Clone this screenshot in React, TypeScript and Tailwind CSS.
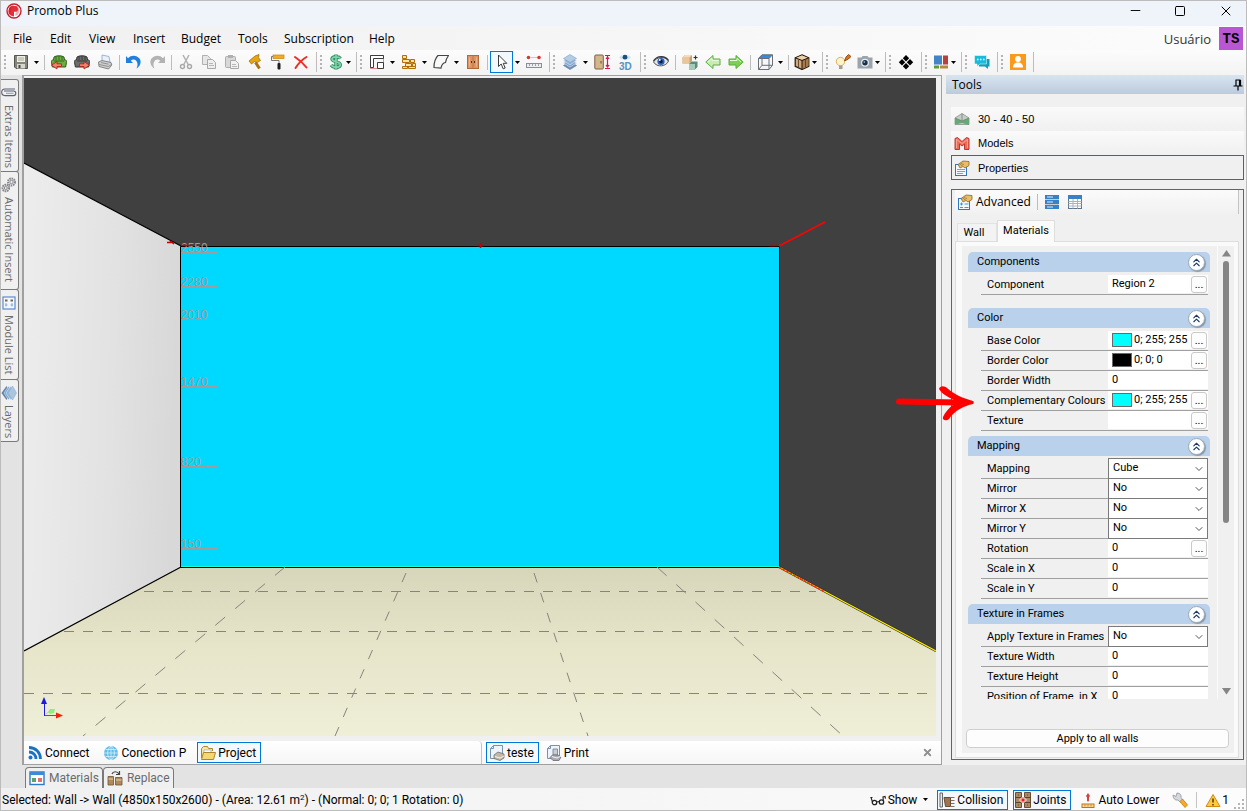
import React, { useState } from 'react';
import { ChevronDown, ChevronsUp, Minus, Square, X } from 'lucide-react';

type IconProps = { className?: string };

const Svg: React.FC<{ size?: number; children: React.ReactNode }> = ({ size = 16, children }) => (
  <svg width={size} height={size} viewBox="0 0 16 16" fill="none" className="shrink-0" aria-hidden="true">
    {children}
  </svg>
);

const LogoIcon = () => (
  <Svg>
    <circle cx="8" cy="8" r="7" fill="#fff" stroke="#c8202f" strokeWidth="1.4" />
    <path d="M7.6 2.6A5.4 5.4 0 0 0 5 12.6V8h2.6z" fill="#d8232f" />
    <path d="M6 3h3.5a2.8 2.8 0 0 1 0 5.8H8v4.6a5.5 5.5 0 0 1-4-2z" fill="#e0313b" />
    <path d="M11 3.6a5.4 5.4 0 0 1-1.6 9.5V10a4 4 0 0 0 1.6-6.4z" fill="#f4a9ac" />
  </Svg>
);

const SaveIcon = () => (
  <Svg>
    <path d="M1.5 1.5h13v13H3L1.5 13z" fill="#85857a" stroke="#55554e" />
    <path d="M4 2h8v6H4z" fill="#efefe6" />
    <path d="M5 4h6M5 6h6" stroke="#a8a894" />
    <path d="M4 10h8v4.5H4z" fill="#d6d6cf" />
    <path d="M5.5 11h2v3h-2z" fill="#4a4a44" />
  </Svg>
);

const SofaIcon: React.FC<{ body: string; dark: string; flip?: boolean }> = ({ body, dark, flip }) => (
  <Svg>
    <path d="M3 3c2-1.6 8-1.6 10 0l.5 3c1.8-.2 2.5 1 2 2.3L14.600 13H1.400L.5 8.300C0 7 .8 5.800 2.500 6z" fill={body} stroke={dark} />
    <path d="M5 2.500v4M8 2.200v4M11 2.500v4M3 7h10" stroke={dark} strokeWidth=".8" />
    {flip ? (
      <path d="M5.500 9.800H10V7.500l5.500 3.700L10 15v-2.500H5.500z" fill="#f0826a" stroke="#a82a1c" strokeWidth=".9" />
    ) : (
      <path d="M10.500 9.800H6V7.500L.5 11.200 6 15v-2.500h4.500z" fill="#f0826a" stroke="#a82a1c" strokeWidth=".9" />
    )}
  </Svg>
);

const PrinterIcon = () => (
  <Svg>
    <path d="M5 1l7 1.500 1 6-8-1z" fill="#e8f1fb" stroke="#8aa4c4" strokeWidth=".8" />
    <path d="M1.500 8L5 6.500l9 2 .8 2.500-3.300 4L2 12.500z" fill="#cfcfcf" stroke="#7c7c7c" strokeWidth=".9" />
    <path d="M2 10.500l9.500 2 3-2M4 8.500l7.500 1.700" stroke="#8a8a8a" strokeWidth=".9" />
  </Svg>
);

const UndoIcon: React.FC<{ color: string; flip?: boolean }> = ({ color, flip }) => (
  <Svg>
    <g transform={flip ? 'matrix(-1 0 0 1 16 0)' : undefined}>
      <path d="M0 2l2 2.200C5 .5 11 1 13.500 4.500c2.500 3.500.5 8-3 10 1.500-3 1.500-6-.5-8C8.500 5 6.500 5 4.800 6.800L7 9H0z" fill={color} />
    </g>
  </Svg>
);

const CutIcon = () => (
  <Svg>
    <path d="M5 1l5.500 10M11 1L5.500 11" stroke="#b1b1b1" strokeWidth="1.500" />
    <circle cx="4.500" cy="12.500" r="2" stroke="#a8a8a8" strokeWidth="1.400" />
    <circle cx="11.500" cy="12.500" r="2" stroke="#a8a8a8" strokeWidth="1.400" />
  </Svg>
);

const CopyIcon = () => (
  <Svg>
    <path d="M1.500 1.500h5l3 3v6h-8z" fill="#e6e6e6" stroke="#b0b0b0" />
    <path d="M6.500 5.500h5l3 3v6h-8z" fill="#eee" stroke="#a8a8a8" />
    <path d="M8 9.500h4M8 11.500h5" stroke="#b8b8b8" />
  </Svg>
);

const PasteIcon = () => (
  <Svg>
    <rect x="1.500" y="2.500" width="10" height="11" rx="1" fill="#d8d8d8" stroke="#adadad" />
    <rect x="4" y="1" width="5" height="3" fill="#b0b0b0" />
    <path d="M6.500 6.500h5l3 3v5h-8z" fill="#f2f2f2" stroke="#a8a8a8" />
    <path d="M8 10.500h4M8 12.500h5" stroke="#b8b8b8" />
  </Svg>
);

const HammerIcon = () => (
  <Svg>
    <path d="M2 7l6-5 4-1.500-.5 3 2 3-4 2.500-2-1.500-3 2.500z" fill="#e5a412" stroke="#a87205" strokeWidth=".8" />
    <path d="M8.500 8.500l4 6" stroke="#a8730c" strokeWidth="3" />
  </Svg>
);

const RollerIcon = () => (
  <Svg>
    <rect x="3" y="1" width="11" height="3.500" fill="#f2ad1c" stroke="#c98507" strokeWidth=".7" />
    <path d="M3 2.500H1.500v4H9V9" stroke="#777" />
    <rect x="7.500" y="9" width="3" height="6.500" rx="1" fill="#1e1e1e" />
  </Svg>
);

const DeleteIcon = () => (
  <Svg>
    <path d="M2 3c3 2 8 6 11.500 10.500M13.500 3C10 5 5 10 2.500 14" stroke="#ee2b24" strokeWidth="2" strokeLinecap="round" />
  </Svg>
);

const DollarIcon = () => (
  <Svg>
    <path d="M12.500 4.500C11 2.500 4.500 1.800 4 5c-.4 3 8.500 2.200 8.300 5.800C12 14 5 13.800 3.200 11M8 .5v15" stroke="#2c8a5c" strokeWidth="3.400" />
    <path d="M12.500 4.500C11 2.500 4.500 1.800 4 5c-.4 3 8.500 2.200 8.300 5.800C12 14 5 13.800 3.200 11M8 1v14" stroke="#7fd3a9" strokeWidth="1.700" />
  </Svg>
);

const WallsIcon = () => (
  <Svg>
    <path d="M1.500 1.500h13v13h-13z" stroke="#e58b8b" />
    <path d="M1.500 13.500v-12h13v3h-10v9zM8.500 14.500v-6h6v6z" fill="#fff" stroke="#3c3c3c" />
  </Svg>
);

const BricksIcon = () => (
  <Svg>
    <path d="M1.500 1.500h4v3h-4zM1.500 5.500h7v3h-7zM9.500 5.500h4v3h-4zM4.500 9.500h6v3h-6zM11.500 9.500h3v3h-3zM1.500 12.500h5v2h-5zM7.500 12.500h7v2h-7z" fill="#ffe2a8" stroke="#b26f06" />
  </Svg>
);

const ShapeIcon = () => (
  <Svg>
    <path d="M5 1.500h10.500c-1.500 2-2.500 4.500-3 7-3 .5-4 3-4.500 5.500l-7-.5C1 8 2.500 4 5 1.500z" fill="#f8f8f8" stroke="#444" strokeWidth="1.200" />
  </Svg>
);

const CabinetIcon = () => (
  <Svg>
    <rect x="2.500" y="1.500" width="11" height="13" fill="#dd9563" stroke="#b06a3c" />
    <path d="M8 2v12" stroke="#b87647" />
    <path d="M4.500 3.500v9M11.500 3.500v9" stroke="#edb386" />
    <path d="M6.500 7v2M9.500 7v2" stroke="#5c2c10" />
  </Svg>
);

const CursorIcon = () => (
  <Svg>
    <path d="M4.500 1v11.500L7.200 10l2 4.800 2-.8-2-4.700h3.600z" fill="#fff" stroke="#3b3b3b" />
  </Svg>
);

const RulerIcon = () => (
  <Svg>
    <circle cx="2.500" cy="3.500" r="1.800" fill="#d43a34" />
    <circle cx="13" cy="3.500" r="1.800" fill="#d43a34" />
    <path d="M5.500 3.500h5" stroke="#999" strokeDasharray="1 1" />
    <rect x=".5" y="9.500" width="15" height="4" fill="#eceef2" stroke="#8a8f98" />
    <path d="M3.500 10v2M6.500 10v2M9.500 10v2M12.500 10v2" stroke="#9da1a9" />
  </Svg>
);

const LayersIcon: React.FC<IconProps> = () => (
  <Svg>
    <path d="M8 7.500l6.500 4L8 15.500l-6.500-4z" fill="#6d91b8" stroke="#56799f" strokeWidth=".6" />
    <path d="M8 5l6.500 4L8 13 1.500 9z" fill="#7fa3c9" stroke="#e2ecf5" strokeWidth=".6" />
    <path d="M8 2.800l6.500 4L8 10.800 1.500 6.800z" fill="#93b3d4" stroke="#e2ecf5" strokeWidth=".6" />
    <path d="M8 .5l6.500 4L8 8.500 1.500 4.500z" fill="#b4cde6" stroke="#7f9fc1" strokeWidth=".6" />
  </Svg>
);

const DoorIcon = () => (
  <Svg>
    <rect x=".8" y="1" width="8.500" height="14" rx="1" fill="#d3b78c" stroke="#7c6243" />
    <path d="M7 7v2.500" stroke="#6a4f30" />
    <path d="M11 1.500h5M11 14.500h5M13.500 2v12M12 5l1.500-2L15 5M12 11l1.500 2 1.500-2" stroke="#d9164f" strokeWidth="1.200" />
  </Svg>
);

const View3DIcon = () => (
  <Svg>
    <path d="M2 3.500C4.500.3 11.500.3 14 3.500c-2.500 3-9.500 3-12 0z" fill="#cfe6f5" />
    <circle cx="8" cy="3.200" r="2.400" fill="#1d4f80" />
    <text x="2" y="15.500" fontSize="10" fontWeight="700" fontFamily="Liberation Sans, Arial, sans-serif" fill="#5592bf">3D</text>
  </Svg>
);

const EyeIcon = () => (
  <Svg>
    <path d="M.5 8C3.500 2.500 12 1.800 15.500 7c-2 5.500-11.500 7-15 1z" fill="#e3e6ea" stroke="#55575c" />
    <circle cx="8" cy="7.500" r="3.600" fill="#2d5fb6" />
    <circle cx="8" cy="7.500" r="1.700" fill="#0b1c40" />
    <circle cx="6.800" cy="6" r=".9" fill="#fff" />
    <path d="M.5 7C4 1.500 12 1 15.500 6.500" stroke="#37393e" strokeWidth="1.300" />
  </Svg>
);

const BoxesIcon = () => (
  <Svg>
    <path d="M.5 3.500L3 1h7v6L7.500 9.500h-7z" fill="#cf9f6a" />
    <path d="M.5 3.500h7v6h-7z" fill="#e8c79c" />
    <path d="M.5 3.500L3 1h7L7.500 3.500z" fill="#f3dcbc" />
    <path d="M7 10l2.500-2.500h6v5.500L13 15.500H7z" fill="#5c8d78" />
    <path d="M7 10h6v5.500H7z" fill="#a3cbb8" />
    <path d="M11.500 3.500h4M13.500 1.500v4" stroke="#333" strokeWidth="1.200" />
  </Svg>
);

const ArrowIcon: React.FC<{ flip?: boolean }> = ({ flip }) => (
  <Svg>
    <g transform={flip ? 'matrix(-1 0 0 1 16 0)' : undefined}>
      <path d="M.8 8L8 1.500V5h7v6H8v3.500z" fill={flip ? '#7cd152' : '#c9ecb5'} stroke="#5aad42" />
      <path d="M3 8l4-3.700V6.500h7" stroke="#e6f8dc" />
    </g>
  </Svg>
);

const CubeIcon = () => (
  <Svg>
    <path d="M1 4.500L5 .8h10.500L12 4.500z" fill="#2f8de4" />
    <path d="M1.500 4.500h10.500v11H1.500zM1.500 4.500l3.500-3.700h10.500v10.500L12 15.500M12 4.500l3.500-3.700M5 5v6.300h10.500M5 11.300l-3.500 4.200" stroke="#6b6f75" />
  </Svg>
);

const WoodCubeIcon = () => (
  <Svg>
    <path d="M8 .8l6.800 3v8.500L8 15.500l-6.800-3.200V3.800z" fill="#d1a87c" stroke="#22190f" strokeWidth="1.200" />
    <path d="M8 1.500l5.500 2.300L8 6 2.500 3.800z" fill="#ecd2ac" />
    <path d="M8 6.500l6.500-2.500v8L8 15z" fill="#a77a4e" />
    <path d="M1.200 3.800L8 6.500l6.800-2.700M8 6.500v9" stroke="#22190f" />
    <path d="M4.500 6v7M11.500 6v7" stroke="#4d3720" strokeWidth=".8" />
  </Svg>
);

const BulbIcon = () => (
  <Svg>
    <circle cx="5.500" cy="7.500" r="4.200" fill="#fdf3cc" stroke="#d9b65c" />
    <path d="M4 11.500h3.500v3.500H4z" fill="#9d9d9d" />
    <path d="M9.500 7L11 3l2.500-2.500 2.500 2L13.500 5z" fill="#d9741c" stroke="#7a3a0a" strokeWidth=".8" />
  </Svg>
);

const CameraIcon = () => (
  <Svg>
    <path d="M.5 3.500h4l1-1.500h5l1 1.500h4v11H.5z" fill="#9aa4ab" />
    <circle cx="8" cy="8.800" r="4" fill="#e6eaed" />
    <circle cx="8" cy="8.800" r="2.700" fill="#1d2f45" />
    <circle cx="7.300" cy="8" r=".9" fill="#7ea6cc" />
  </Svg>
);

const DiamondsIcon = () => (
  <Svg>
    <path d="M8 1l3.200 3.200L8 7.400 4.800 4.200zM4 5l3.200 3.200L4 11.400.8 8.200zM12 5l3.200 3.200-3.200 3.200-3.200-3.200zM8 9l3.200 3.200L8 15.400l-3.200-3.200z" fill="#000" />
  </Svg>
);

const WindowsIcon = () => (
  <Svg>
    <path d="M1 1.500h8v9H1z" fill="#4383c8" />
    <path d="M10 1.500h5v9h-5z" fill="#b6423f" />
    <path d="M1 11.500h5v3H1z" fill="#5c9b3b" />
    <path d="M7 11.500h8v3H7z" fill="#b8893a" />
  </Svg>
);

const ChatIcon = () => (
  <Svg>
    <path d="M5 5h10.500v7.500H14V15l-3-2.500H5z" fill="#0f9db8" />
    <path d="M.5 1.500h12v8.500H6L3 12.500V10H.5z" fill="#19bcd8" stroke="#fff" strokeWidth=".5" />
    <path d="M3 5.500h1.500M6 5.500h1.500M9 5.500h1.500" stroke="#fff" strokeWidth="1.500" />
  </Svg>
);

const PersonIcon = () => (
  <Svg>
    <path d="M0 0h16v16H0z" fill="#f99a1d" />
    <circle cx="8" cy="5" r="2.900" fill="#fff" />
    <path d="M3 13.500c0-3.500 2-5 5-5s5 1.500 5 5z" fill="#fff" />
  </Svg>
);

const TriangleIcon = () => (
  <Svg>
    <path d="M1 7l7-4.500L15 7v6.500H1z" fill="#c5cdc7" stroke="#87948a" strokeWidth=".8" />
    <path d="M1 7l7 3 7-3v7l-7-2-7 1.500z" fill="#67a877" />
    <path d="M8 2.500V10M1 7l7 3 7-3" stroke="#75827a" strokeWidth=".8" />
  </Svg>
);

const ModelsIcon = () => (
  <Svg>
    <path d="M1 14.500v-11L3.500 2.500 8 6.500l4.500-4 2.500 1v11h-4.500V9L8 11 5.500 9v5.500z" fill="#ef6a5a" stroke="#b93a2c" />
    <path d="M2.500 13V4.500L8 8.500l5.500-4V13" stroke="#f9b3a6" strokeWidth=".8" />
  </Svg>
);

const PropertiesIcon: React.FC<{ plus?: boolean }> = ({ plus }) => (
  <Svg>
    <rect x="1.500" y="4.500" width="11" height="11" fill="#f4f9ff" stroke="#2b77c8" />
    {plus ? (
      <path d="M3 10h3M4.500 8.500v3M7.500 10h4M3 13.500h3M7.500 13.500h4" stroke="#4d90d6" />
    ) : (
      <path d="M3 9.500h8M3 11.500h8M3 13.500h6" stroke="#6da6df" />
    )}
    <path d="M4 4.500l5-3.500 6 .5v4l-4 2.500-2-1.500-3 1.500z" fill="#e8bd6a" stroke="#8c6526" strokeWidth=".8" />
    <path d="M5.500 5l3-2M7 6l3-2" stroke="#8c6526" strokeWidth=".7" />
  </Svg>
);

const RowsIcon = () => (
  <Svg>
    <path d="M1 1h14v4H1zM1 6h14v4H1zM1 11h14v4H1z" fill="#3a80c5" />
    <path d="M1 5.500h14M1 10.500h14" stroke="#c3ced9" />
    <path d="M3 3h6M3 8h6M3 13h6" stroke="#dcebf8" />
  </Svg>
);

const TableIcon = () => (
  <Svg>
    <rect x="1.500" y="1.500" width="13" height="13" fill="#fff" stroke="#61758a" />
    <path d="M1 1h14v4H1z" fill="#3a80c5" />
    <path d="M1.500 7.500h13M1.500 9.500h13M1.500 12h13M6 5v9.500M10.500 5v9.500" stroke="#a6b4c2" />
  </Svg>
);

const RssIcon = () => (
  <Svg>
    <circle cx="3.500" cy="12.500" r="2" fill="#1c72c2" />
    <path d="M2 7c4 0 7 3 7 7M2 2.500c6.500 0 11.500 5 11.500 11.500" stroke="#1c72c2" strokeWidth="2.800" />
  </Svg>
);

const GlobeIcon = () => (
  <Svg>
    <circle cx="8" cy="8" r="7" fill="#62bce8" />
    <path d="M8 1v14M1 8h14M2.500 4.500h11M2.500 11.500h11M8 1C3.500 4 3.500 12 8 15c4.500-3 4.500-11 0-14z" stroke="#d8f0fb" strokeWidth=".8" />
  </Svg>
);

const FolderIcon = () => (
  <Svg>
    <path d="M1.500 13V3.500l2-2h4l1 2h4V6" fill="#f8e5a0" stroke="#a98630" />
    <path d="M4 5h7v4H4z" fill="#fff" stroke="#a0a0a0" strokeWidth=".6" />
    <path d="M1.500 14.500l2-7h12l-2 7z" fill="#f6d771" stroke="#a98630" />
  </Svg>
);

const PageIcon: React.FC<{ printer?: boolean }> = ({ printer }) => (
  <Svg>
    <path d="M4.500.5h9v13h-12v-10z" fill="#eef4fb" stroke="#7692b3" />
    <path d="M4.500.5v3h-3" stroke="#7692b3" />
    {printer ? (
      <>
        <path d="M7 4h4.500v6H7z" fill="#c9ccd2" stroke="#777a82" strokeWidth=".8" />
        <path d="M4 12.500L6.500 10h5.500l3 2-2 3.500H7z" fill="#a9abb0" stroke="#686a70" strokeWidth=".8" />
      </>
    ) : (
      <path d="M5 10l4-3 6 2v4l-4 2.500-6-2z" fill="#c1b9a8" stroke="#6f6f6f" strokeWidth=".8" />
    )}
    <path d="M6 11.500l5 1.500 4-2" stroke="#f4f4f4" />
  </Svg>
);

const MaterialsIcon = () => (
  <Svg>
    <rect x="1" y="2" width="14" height="12.500" fill="#fff" stroke="#2d7ac4" strokeWidth="1.400" />
    <path d="M1 2h14v3H1z" fill="#3c8bd6" />
    <path d="M3 8h4v4H3z" fill="#5ca36a" />
    <path d="M9 8h4v4H9z" fill="#e0706e" />
  </Svg>
);

const ReplaceIcon = () => (
  <Svg>
    <path d="M1 6.500h5.500v8.500H1zM8.500 7.500H15V15H8.500z" fill="#b08a5c" stroke="#6f5433" strokeWidth=".8" />
    <path d="M1.500 9h4.500M9 10h5.500" stroke="#ead4b0" />
    <path d="M5 4c1-3 5.500-3 7 0M12.500 1v3.500H9" stroke="#444" strokeWidth="1.200" />
  </Svg>
);

const ClipIcon = () => (
  <Svg>
    <path d="M3 6h9.500a2.300 2.300 0 0 1 0 4.600H4a3.200 3.200 0 0 1 0-6.600h9.500M14 4H5" stroke="#54627a" strokeWidth="1.100" />
    <path d="M5 8.300h7.500" stroke="#8d99ad" />
  </Svg>
);

const GearsIcon = () => (
  <Svg>
    <circle cx="10.500" cy="5" r="3.500" stroke="#85878c" strokeWidth="2" strokeDasharray="1.600 .7" />
    <circle cx="10.500" cy="5" r="1.700" stroke="#85878c" />
    <circle cx="4.800" cy="11" r="3.300" stroke="#85878c" strokeWidth="2" strokeDasharray="1.600 .7" />
    <circle cx="4.800" cy="11" r="1.500" stroke="#85878c" />
  </Svg>
);

const ModuleIcon = () => (
  <Svg>
    <rect x="2" y="2" width="12" height="12" fill="#f4f8fe" stroke="#5b8bd0" strokeWidth="1.200" />
    <path d="M4 4.500h2.500v2H4zM9.500 4.500H12v2H9.500z" fill="#6b6a52" />
    <path d="M4 10h2.500M9.500 10H12M5 8v3.500M11 8v3.500" stroke="#86a9d8" />
  </Svg>
);

const SideLayersIcon = () => (
  <Svg>
    <g transform="rotate(90 8 8)">
      <path d="M8 6.500l7 4L8 15.500l-7-5z" fill="#5d83ad" />
      <path d="M8 4.500l7 4L8 13 1 8.500z" fill="#7fa3c9" stroke="#e2ecf5" strokeWidth=".6" />
      <path d="M8 2.500l7 4L8 11 1 6.500z" fill="#93b3d4" stroke="#e2ecf5" strokeWidth=".6" />
      <path d="M8 .5l7 4L8 9 1 4.500z" fill="#a9c5e0" stroke="#8fb0d2" strokeWidth=".6" />
    </g>
  </Svg>
);

const GlassesIcon = () => (
  <Svg>
    <circle cx="4.500" cy="10.500" r="2.200" stroke="#222" strokeWidth="1.300" />
    <circle cx="11.500" cy="10" r="2.200" stroke="#222" strokeWidth="1.300" />
    <path d="M6.500 10l3-.5M2.500 10L1 5.500h1.500M13.300 8.500L13 5l2-.5.5 2" stroke="#222" strokeWidth="1.100" />
  </Svg>
);

const CollisionIcon = () => (
  <Svg>
    <path d="M1 1h2.500v14H1z" fill="#e7e9eb" stroke="#62676b" />
    <path d="M5 5.500h6.500v9H6.500z" fill="#9b7450" stroke="#6b4b31" />
    <path d="M12 5.500h3.500M12 8.500h3.500M12 11.500h3.500M12 14.500h3.500" stroke="#7d6d62" />
  </Svg>
);

const JointsIcon = () => (
  <Svg>
    <path d="M.5.500h6v15h-6zM9.500.500h6v15h-6z" fill="#ad8963" stroke="#6b4d34" />
    <path d="M.5 5.500h6M.5 10.500h6M9.500 5.500h6M9.500 10.500h6M3 3h1M3 13h1M12 3h1M12 13h1" stroke="#5b402a" />
    <path d="M7 5h2v2h2v2H9v2H7V9H5V7h2z" fill="#ee1c1c" stroke="#fff" strokeWidth=".8" />
  </Svg>
);

const AutoLowerIcon = () => (
  <Svg>
    <path d="M8 1l2 3-1 1.500V8.500L8 10 7 8.500v-3L6 4z" fill="#d3413b" />
    <rect x="2" y="12" width="12" height="3.500" fill="#ffd890" stroke="#b9771c" />
    <path d="M5 12.500v2M8 12.500v2M11 12.500v2" stroke="#b9771c" strokeWidth=".8" />
  </Svg>
);

const WrenchIcon = () => (
  <Svg>
    <path d="M1 3l3 1.500L5 1c3 0 4.500 2 4 4.500L11 8 8.500 10.500 6 8C3 8.500 1 6.500 1 3z" fill="#d5d9dd" stroke="#8d9399" strokeWidth=".8" />
    <path d="M8 9.500L10.500 7l5 6-2.500 2.500z" fill="#f8ab2b" stroke="#c57a09" strokeWidth=".8" />
  </Svg>
);

const WarningIcon = () => (
  <Svg>
    <path d="M8 2.500l7 12H1z" fill="#ffc93c" stroke="#d08b16" strokeLinejoin="round" />
    <path d="M8 6.500v4M8 12v1.500" stroke="#3f3200" strokeWidth="1.400" />
  </Svg>
);

const Caret = () => (
  <svg width="5" height="3" viewBox="0 0 5 3" aria-hidden="true" className="shrink-0">
    <path d="M0 0h5L2.500 3z" fill="#000" />
  </svg>
);

type ToolItem =
  | { kind: 'grip' | 'sep' | 'end' | 'caret' }
  | { kind: 'icon' | 'drop'; label: string; icon: React.ReactNode; active?: boolean };

const grip: ToolItem = { kind: 'grip' };
const sep: ToolItem = { kind: 'sep' };
const end: ToolItem = { kind: 'end' };
const caret: ToolItem = { kind: 'caret' };
const icon = (label: string, node: React.ReactNode, active = false): ToolItem => ({ kind: 'icon', label, icon: node, active });
const drop = (label: string, node: React.ReactNode): ToolItem => ({ kind: 'drop', label, icon: node });

const toolItems: ToolItem[] = [
  grip, icon('Save', <SaveIcon />), caret, sep,
  icon('Import', <SofaIcon body="#6fae3e" dark="#2c5c17" />),
  icon('Export', <SofaIcon body="#6c6c6c" dark="#333" flip />),
  icon('Print', <PrinterIcon />), sep,
  icon('Undo', <UndoIcon color="#2180dc" />),
  icon('Redo', <UndoIcon color="#b3b3b3" flip />), sep,
  icon('Cut', <CutIcon />), icon('Copy', <CopyIcon />), icon('Paste', <PasteIcon />),
  icon('Build', <HammerIcon />), icon('Paint', <RollerIcon />), icon('Delete', <DeleteIcon />), end,
  grip, drop('Budget', <DollarIcon />), end,
  grip, icon('Walls', <WallsIcon />), caret, icon('Bricks', <BricksIcon />), caret,
  icon('Shapes', <ShapeIcon />), caret, icon('Cabinet', <CabinetIcon />), sep,
  icon('Select', <CursorIcon />, true), caret, icon('Measure', <RulerIcon />), end,
  grip, icon('Layers', <LayersIcon />), caret, icon('Door height', <DoorIcon />), icon('3D view', <View3DIcon />), end,
  grip, icon('Visibility', <EyeIcon />), sep,
  icon('Move module', <BoxesIcon />), icon('Previous', <ArrowIcon />), icon('Next', <ArrowIcon flip />), sep,
  icon('Perspective', <CubeIcon />), caret, sep, drop('Render mode', <WoodCubeIcon />), end,
  grip, icon('Lighting', <BulbIcon />), drop('Camera', <CameraIcon />), end,
  grip, icon('Arrange', <DiamondsIcon />), end,
  grip, drop('Windows', <WindowsIcon />), end,
  grip, icon('Chat', <ChatIcon />), end,
  grip, icon('Account', <PersonIcon />), end,
];

const ToolbarItem: React.FC<{ item: ToolItem }> = ({ item }) => {
  switch (item.kind) {
    case 'grip':
      return (
        <span className="flex h-full w-2 items-center justify-center">
          <span className="h-[14px] w-[2px] bg-[repeating-linear-gradient(to_bottom,#b4b4b4_0_2px,transparent_2px_4px)]" />
        </span>
      );
    case 'sep':
      return (
        <span className="flex h-full w-[6px] items-center justify-center">
          <span className="h-[15px] w-px bg-[#bdbdbd]" />
        </span>
      );
    case 'end':
      return (
        <span className="flex h-full w-[5px] items-center justify-end">
          <span className="h-5 w-px bg-[#bdbdbd]" />
        </span>
      );
    case 'caret':
      return (
        <button aria-label="More options" className="flex h-full w-[9px] items-center justify-center">
          <Caret />
        </button>
      );
    case 'drop':
      return (
        <button aria-label={item.label} className="flex h-[22px] w-[27px] items-center justify-start gap-[2px] pl-[3px]">
          {item.icon}
          <Caret />
        </button>
      );
    default:
      return (
        <button
          aria-label={item.label}
          className={`flex h-[22px] w-[23px] items-center justify-center ${
            item.active ? 'border border-[#0078d7] bg-[#f3f8fd]' : ''
          }`}
        >
          {item.icon}
        </button>
      );
  }
};

const menus = [
  { label: 'File', width: 'w-[37px]' },
  { label: 'Edit', width: 'w-[39px]' },
  { label: 'View', width: 'w-[44px]' },
  { label: 'Insert', width: 'w-[48px]' },
  { label: 'Budget', width: 'w-[57px]' },
  { label: 'Tools', width: 'w-[46px]' },
  { label: 'Subscription', width: 'w-[85px]' },
  { label: 'Help', width: 'w-[40px]' },
];

const railTabs = [
  { label: 'Extras Items', height: 'h-[93px]', icon: <ClipIcon /> },
  { label: 'Automatic Insert', height: 'h-[119px]', icon: <GearsIcon /> },
  { label: 'Module List', height: 'h-[91px]', icon: <ModuleIcon /> },
  { label: 'Layers', height: 'h-[63px]', icon: <SideLayersIcon /> },
];

type Property = {
  label: string;
  value: string;
  kind: 'text' | 'browse' | 'color' | 'select';
  swatch?: string;
};

type PropertyGroup = { title: string; rows: Property[]; gap: string };

const groups: PropertyGroup[] = [
  {
    title: 'Components',
    gap: 'mb-[13px]',
    rows: [{ label: 'Component', value: 'Region 2', kind: 'browse' }],
  },
  {
    title: 'Color',
    gap: 'mb-[5px]',
    rows: [
      { label: 'Base Color', value: '0; 255; 255', kind: 'color', swatch: 'bg-[#00ffff]' },
      { label: 'Border Color', value: '0; 0; 0', kind: 'color', swatch: 'bg-black' },
      { label: 'Border Width', value: '0', kind: 'text' },
      { label: 'Complementary Colours', value: '0; 255; 255', kind: 'color', swatch: 'bg-[#00ffff]' },
      { label: 'Texture', value: '', kind: 'browse' },
    ],
  },
  {
    title: 'Mapping',
    gap: 'mb-[5px]',
    rows: [
      { label: 'Mapping', value: 'Cube', kind: 'select' },
      { label: 'Mirror', value: 'No', kind: 'select' },
      { label: 'Mirror X', value: 'No', kind: 'select' },
      { label: 'Mirror Y', value: 'No', kind: 'select' },
      { label: 'Rotation', value: '0', kind: 'browse' },
      { label: 'Scale in X', value: '0', kind: 'text' },
      { label: 'Scale in Y', value: '0', kind: 'text' },
    ],
  },
  {
    title: 'Texture in Frames',
    gap: '',
    rows: [
      { label: 'Apply Texture in Frames', value: 'No', kind: 'select' },
      { label: 'Texture Width', value: '0', kind: 'text' },
      { label: 'Texture Height', value: '0', kind: 'text' },
      { label: 'Position of Frame  in X', value: '0', kind: 'text' },
    ],
  },
];

const PropertyRow: React.FC<{ row: Property; id: string }> = ({ row, id }) => (
  <div className="flex h-5 shrink-0 items-stretch border-b border-[#a0a0a0]">
    <label htmlFor={id} className="flex min-w-0 flex-1 items-center whitespace-pre pl-[6px] pt-px">
      {row.label}
    </label>
    {row.kind === 'select' ? (
      <div className="relative w-[100px] shrink-0">
        <select
          id={id}
          defaultValue={row.value}
          className="-mt-px block h-[21px] w-full appearance-none border border-[#7a7a7a] bg-white pb-px pl-1 outline-none"
        >
          <option>{row.value}</option>
          <option>{row.value === 'No' ? 'Yes' : 'Box'}</option>
        </select>
        <ChevronDown size={12} strokeWidth={2} className="pointer-events-none absolute right-[3px] top-1 text-[#555]" />
      </div>
    ) : (
      <div className="mb-px flex w-[100px] shrink-0 items-center bg-white pl-1 pr-px">
        {row.swatch && <span className={`mr-[2px] h-[14px] w-5 shrink-0 border border-[#6a6a6a] ${row.swatch}`} />}
        <input id={id} defaultValue={row.value} className="h-4 min-w-0 flex-1 bg-transparent pb-px outline-none" />
        {row.kind !== 'text' && (
          <button
            aria-label={`Browse ${row.label}`}
            className="flex h-[17px] w-4 shrink-0 items-end justify-center rounded-[3px] border border-[#c9c9c9] bg-[#fdfdfd] leading-[15px]"
          >
            ...
          </button>
        )}
      </div>
    )}
  </div>
);

const PropertySection: React.FC<{ group: PropertyGroup }> = ({ group }) => {
  const [open, setOpen] = useState(true);

  return (
    <section className={`shrink-0 ${group.gap}`}>
      <h3 className="mb-[3px] flex h-5 items-center justify-between rounded-t-[5px] bg-[#b9d1ea] pl-[9px] pr-[5px]">
        {group.title}
        <button
          aria-label={`Toggle ${group.title}`}
          onClick={() => setOpen(!open)}
          className="flex size-[17px] items-center justify-center rounded-full border border-[#9aa9ba] bg-white shadow-[1px_1px_1px_#8696a8]"
        >
          <ChevronsUp size={13} strokeWidth={2} className="text-[#1c3561]" />
        </button>
      </h3>
      {open && (
        <div className="ml-[13px] mr-[2px]">
          {group.rows.map((row) => (
            <PropertyRow key={row.label} row={row} id={`${group.title}-${row.label}`.replace(/\s+/g, '-')} />
          ))}
        </div>
      )}
    </section>
  );
};

const heights = [
  { label: '2550', y: 252 },
  { label: '2280', y: 286 },
  { label: '2010', y: 319 },
  { label: '1470', y: 386 },
  { label: '820', y: 466 },
  { label: '150', y: 548 },
];

const Scene = () => (
  <svg viewBox="24 78 912 658" preserveAspectRatio="none" className="block h-full w-full" role="img" aria-label="3D view">
    <defs>
      <linearGradient id="leftWall" x1="0" x2="1" y1="0" y2="0.1">
        <stop offset="0" stopColor="#ededed" />
        <stop offset="0.6" stopColor="#e2e2e2" />
        <stop offset="1" stopColor="#d8d8d8" />
      </linearGradient>
      <linearGradient id="floor" x1="0" x2="0" y1="0" y2="1">
        <stop offset="0" stopColor="#d7d6bb" />
        <stop offset="0.5" stopColor="#e7e6cb" />
        <stop offset="1" stopColor="#efeed7" />
      </linearGradient>
    </defs>
    <path d="M24 78h912v658H24z" fill="#404040" />
    <path d="M24 163l157 83v321L24 651z" fill="url(#leftWall)" />
    <path d="M24 651l157-84h598l157 84v85H24z" fill="url(#floor)" />
    <path d="M24 163l157 83M24 651l157-84" stroke="#000" strokeWidth="1.200" />
    <path d="M180.500 246.500h599v321h-599z" fill="#00d9ff" stroke="#000" />
    <path d="M181 566.500h598" stroke="#18ffd2" />
    <g stroke="#85857a" fill="none">
      <path d="M144 591.500h672M64 631.500h832M24 693.500h912" strokeDasharray="10 9" />
      <path d="M285 567L83 736M657 567l186 169" strokeDasharray="13 13" />
      <path d="M406 573l-71 163M534 573l54 163" strokeDasharray="10 11" />
    </g>
    <path d="M779 567l157 84" stroke="#222" strokeWidth="2" />
    <path d="M779 567l157 84" stroke="#ffee00" strokeWidth="1.200" />
    <path d="M779 567l46 25" stroke="#ff2a00" strokeWidth="1.400" strokeDasharray="3 1" />
    <path d="M779 246l46-24" stroke="#f00" strokeWidth="1.500" />
    <g fill="#a39b9b" fontFamily="Liberation Sans, Arial, sans-serif" fontSize="12">
      {heights.map((mark) => (
        <g key={mark.label}>
          <text x="181" y={mark.y}>{mark.label}</text>
          <path d={`M181 ${mark.y + 0.5}h36`} stroke="#a39b9b" />
        </g>
      ))}
    </g>
    <path d="M167 242.500h6M170 241l4 3M182 245.500h9M477 245.500h7M480.500 243v5M769 245.500h9" stroke="#c80000" strokeWidth="1.500" />
    <path d="M44.500 716v-13" stroke="#1a1ae0" />
    <path d="M44 697l3 7h-6z" fill="#1a1ae0" />
    <path d="M46 714l5-4" stroke="#90ee80" />
    <path d="M48 712l2-3h5l-1 4-4 1z" fill="#90ee80" />
    <path d="M45 715.500h12" stroke="#ff1e00" />
    <path d="M56 712.500l7 3-7 3z" fill="#ff1e00" />
  </svg>
);

const ViewTab: React.FC<{ label: string; icon: React.ReactNode; active?: boolean }> = ({ label, icon: node, active }) => (
  <button
    className={`flex h-[21px] items-center gap-[2px] border px-[2px] pr-1 ${
      active ? 'border-[#0078d7] bg-[#f3f8fd]' : 'border-transparent'
    }`}
  >
    {node}
    {label}
  </button>
);

const Viewport = () => (
  <main className="flex min-w-0 flex-1 flex-col border border-l-2 border-[#a0a0a0] bg-[#f0f0f0]">
    <div className="min-h-0 flex-1 pb-[5px] pr-[5px] pt-[2px]">
      <Scene />
    </div>
    <div className="flex h-[23px] shrink-0 items-center bg-linear-to-b from-white to-[#f6f6f6]">
      <div className="flex h-full w-[458px] shrink-0 items-center gap-[6px] rounded-tr border-r border-[#c4c4c4]">
        <ViewTab label="Connect" icon={<RssIcon />} />
        <ViewTab label="Conection P" icon={<GlobeIcon />} />
        <ViewTab label="Project" icon={<FolderIcon />} active />
      </div>
      <div className="flex flex-1 items-center gap-1 pl-1">
        <ViewTab label="teste" icon={<PageIcon />} active />
        <ViewTab label="Print" icon={<PageIcon printer />} />
      </div>
      <button aria-label="Close view" className="mr-2">
        <X size={11} strokeWidth={4} className="text-[#8f8f8f]" />
      </button>
    </div>
  </main>
);

const PinIcon = () => (
  <svg width="10" height="12" viewBox="0 0 10 12" aria-hidden="true">
    <path d="M2.500 1h5M3 1v6M6.500 1v6M7.500 1v6M.5 7h9M5 7v4.500" stroke="#000" strokeWidth="1.200" fill="none" />
  </svg>
);

const ToolsPanel = () => (
  <aside className="relative flex w-[300px] shrink-0 flex-col bg-[#f0f0f0] pr-[2px] text-[11px]">
    <header className="flex h-[19px] shrink-0 items-center justify-between bg-linear-to-b from-[#d8e4f1] to-[#bccbdc] pl-[6px] pr-px">
      <h2 className="font-['Open_Sans','Noto_Sans',sans-serif] text-[12px]">Tools</h2>
      <button aria-label="Pin panel">
        <PinIcon />
      </button>
    </header>

    <nav className="ml-[5px] mt-[13px] flex shrink-0 flex-col font-['Liberation_Sans',Arial,sans-serif]">
      {[
        { label: '30 - 40 - 50', icon: <TriangleIcon /> },
        { label: 'Models', icon: <ModelsIcon /> },
      ].map((entry) => (
        <button key={entry.label} className="flex h-6 items-center gap-2 bg-linear-to-b from-[#fafafa] to-[#f0f0f0] pl-[3px]">
          {entry.icon}
          {entry.label}
        </button>
      ))}
      <button className="flex h-[25px] items-center gap-2 border border-[#0078d7] bg-[#f0f0f0] pl-[2px]">
        <PropertiesIcon />
        Properties
      </button>
    </nav>

    <div className="mb-[5px] ml-[5px] mt-[9px] flex min-h-0 flex-1 flex-col border border-[#646464] bg-[#f0f0f0] pb-px pl-[3px] pr-1">
      <div className="flex h-6 shrink-0 items-center border-r border-[#c4c4c4] bg-linear-to-b from-[#fbfbfb] to-[#f1f1f1] pl-[2px] font-['Open_Sans','Noto_Sans',sans-serif] text-[12px]">
        <button className="flex items-center gap-[3px]">
          <PropertiesIcon plus />
          Advanced
        </button>
        <span className="mx-[6px] h-4 w-px bg-[#bdbdbd]" />
        <button aria-label="Categories">
          <RowsIcon />
        </button>
        <button aria-label="Table" className="ml-[7px]">
          <TableIcon />
        </button>
      </div>

      <div role="tablist" className="mt-[6px] flex h-[21px] shrink-0 items-end pl-[2px]">
        <button role="tab" aria-selected={false} className="h-[18px] w-10 border border-b-0 border-[#e2e2e2] bg-[#f3f3f3] pr-[6px]">
          Wall
        </button>
        <button role="tab" aria-selected className="z-10 -mb-px h-[22px] w-[58px] border border-b-0 border-[#dedede] bg-[#fafafa] pb-[2px]">
          Materials
        </button>
      </div>

      <div className="flex min-h-0 flex-1 border border-[#dedede] bg-[#fafafa] p-1 pl-[6px]">
        <div className="flex min-w-0 flex-1 flex-col bg-[#f0f0f0]">
          <div className="flex min-h-0 flex-1">
            <div className="mr-[7px] flex min-w-0 flex-1 flex-col overflow-hidden pl-[6px] pt-[6px]">
              {groups.map((group) => (
                <PropertySection key={group.title} group={group} />
              ))}
            </div>
            <div className="flex w-[17px] shrink-0 flex-col items-center justify-between border-l border-[#fafafa] py-1">
              <svg width="9" height="7" viewBox="0 0 9 7" aria-hidden="true">
                <path d="M4.500 0L9 6.500H0z" fill="#858585" />
              </svg>
              <div className="my-1 min-h-0 w-[6px] flex-1">
                <div className="h-[62%] rounded-full bg-[#858585]" />
              </div>
              <svg width="9" height="7" viewBox="0 0 9 7" aria-hidden="true">
                <path d="M4.500 6.500L9 0H0z" fill="#858585" />
              </svg>
            </div>
          </div>
          <button className="mb-[5px] ml-1 mr-[5px] mt-[30px] h-[19px] shrink-0 rounded-[4px] border border-[#cfcfcf] bg-[#fdfdfd]">
            Apply to all walls
          </button>
        </div>
      </div>
    </div>

    <svg
      width="80"
      height="38"
      viewBox="0 0 80 38"
      className="pointer-events-none absolute -left-[51px] top-[309px]"
      aria-hidden="true"
    >
      <path d="M4 17.500l60 1" fill="none" stroke="#f00" strokeWidth="6" strokeLinecap="round" />
      <path d="M44 5c1-4 6-3 8-1 7 6 15 10 26 13 1 1 1 2 0 3-9 2-18 6-24 15-2 2-7 2-6-2 2-5 6-9 11-13v-4C53 13 47 10 44 5z" fill="#f00" />
    </svg>
  </aside>
);

const StatusButton: React.FC<{ label: string; icon: React.ReactNode; active?: boolean }> = ({ label, icon: node, active }) => (
  <button
    className={`flex h-5 items-center gap-[2px] border px-px pr-1 ${
      active ? 'border-[#0078d7] bg-[#f3f8fd]' : 'border-transparent'
    }`}
  >
    {node}
    {label}
  </button>
);

const App: React.FC = () => {
  return (
    <div className="flex h-screen flex-col overflow-hidden border border-[#bcbcbc] bg-[#e3e3e3] font-[Roboto,'Open_Sans',sans-serif] text-[12px] leading-4 text-black">
      <header className="flex h-[25px] shrink-0 items-center bg-[#eff4fa] pb-[6px] pl-[5px]">
        <LogoIcon />
        <h1 className="ml-[5px] flex-1 font-['Open_Sans','Noto_Sans',sans-serif]">Promob Plus</h1>
        <button aria-label="Minimize" className="flex w-[38px] justify-center">
          <Minus size={15} strokeWidth={1.500} />
        </button>
        <button aria-label="Maximize" className="flex w-[52px] justify-center">
          <Square size={12} strokeWidth={2} />
        </button>
        <button aria-label="Close" className="flex w-10 justify-center">
          <X size={16} strokeWidth={1.500} />
        </button>
      </header>

      <div className="flex h-6 shrink-0 items-center bg-linear-to-r from-[#f0f0f0] to-[#fcfcfc] pl-3 pr-[3px] pt-px font-['Open_Sans','Noto_Sans',sans-serif]">
        <nav className="flex flex-1">
          {menus.map((menu) => (
            <button key={menu.label} className={`text-left ${menu.width}`}>
              {menu.label}
            </button>
          ))}
        </nav>
        <span className="mr-2 text-[13px] text-[#333]">Usuário</span>
        <span className="flex h-[23px] w-6 items-center justify-center bg-[#ba55d3] font-['Liberation_Mono',monospace] text-[14px] font-bold">
          TS
        </span>
      </div>

      <div role="toolbar" className="flex h-[25px] shrink-0 items-center bg-linear-to-b from-[#fcfcfc] to-[#f3f3f3] pb-px">
        {toolItems.map((item, index) => (
          <ToolbarItem key={index} item={item} />
        ))}
      </div>

      <div className="flex min-h-0 flex-1">
        <nav className="flex w-[18px] shrink-0 flex-col pt-1 text-[#6b6b6b]">
          {railTabs.map((tab) => (
            <button
              key={tab.label}
              className={`-mb-px flex w-[18px] items-center justify-start gap-1 rounded-r-[3px] border border-l-0 border-[#7a7a7a] bg-[#f0f0f0] pr-[2px] pt-[5px] font-['Open_Sans','Noto_Sans',sans-serif] text-[11px] [writing-mode:vertical-rl] ${tab.height}`}
            >
              {tab.icon}
              {tab.label}
            </button>
          ))}
        </nav>
        <div className="w-[3px] shrink-0" />
        <Viewport />
        <div className="w-1 shrink-0 bg-[#f0f0f0]" />
        <ToolsPanel />
      </div>

      <div className="flex h-[23px] shrink-0 items-end pl-6 pt-[2px] text-[#6b6b6b]">
        <button className="flex h-full items-center gap-1 rounded-t border border-b-0 border-[#7a7a7a] bg-[#f0f0f0] px-[3px]">
          <MaterialsIcon />
          Materials
        </button>
        <button className="flex h-full items-center gap-1 rounded-t border border-b-0 border-[#7a7a7a] bg-[#f0f0f0] px-[3px]">
          <ReplaceIcon />
          Replace
        </button>
      </div>

      <footer className="flex h-[22px] shrink-0 items-center bg-linear-to-r from-[#f0f0f0] to-[#fcfcfc] pl-px pr-px pt-px">
        <p className="flex-1">
          Selected: Wall -&gt; Wall (4850x150x2600) - (Area: 12.61 m<sup className="text-[8px]">2</sup>) - (Normal: 0; 0; 1 Rotation: 0)
        </p>
        <button className="mr-[9px] flex items-center gap-[2px]">
          <GlassesIcon />
          Show
          <span className="ml-1">
            <Caret />
          </span>
        </button>
        <StatusButton label="Collision" icon={<CollisionIcon />} active />
        <span className="w-[5px]" />
        <StatusButton label="Joints" icon={<JointsIcon />} active />
        <span className="w-[7px]" />
        <StatusButton label="Auto Lower" icon={<AutoLowerIcon />} />
        <button aria-label="Settings" className="ml-2">
          <WrenchIcon />
        </button>
        <span className="mx-2 h-4 w-px bg-[#c4c4c4]" />
        <button className="flex items-center gap-px">
          <WarningIcon />1
        </button>
        <svg width="11" height="11" viewBox="0 0 11 11" className="ml-[5px] self-end" aria-hidden="true">
          <path d="M8 0h2v2H8zM4 4h2v2H4zM8 4h2v2H8zM0 8h2v2H0zM4 8h2v2H4zM8 8h2v2H8z" fill="#b5b5b5" />
        </svg>
      </footer>
    </div>
  );
};

export default App;
